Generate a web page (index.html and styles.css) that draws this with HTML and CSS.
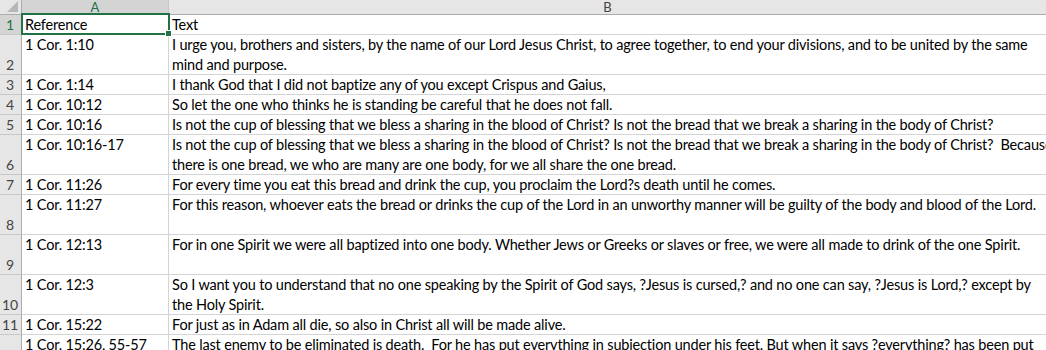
FILE: index.html
```html
<!DOCTYPE html>
<html>
<head>
<meta charset="utf-8">
<link rel="stylesheet" href="styles.css">
</head>
<body>
<div class="sheet">
  <div class="hdr corner"><span class="tri"></span></div>
  <div class="hdr col sel">A</div>
  <div class="hdr col colb">B</div>

  <div class="rh sel-rh">1</div>
  <div class="c a a1">Reference<span class="selbox"><span class="handle"></span></span></div>
  <div class="c b">Text</div>

  <div class="rh h2">2</div>
  <div class="c a h2">1 Cor. 1:10</div>
  <div class="c b h2">I urge you, brothers and sisters, by the name of our Lord Jesus Christ, to agree together, to end your divisions, and to be united by the same<br>mind and purpose.</div>

  <div class="rh">3</div>
  <div class="c a">1 Cor. 1:14</div>
  <div class="c b">I thank God that I did not baptize any of you except Crispus and Gaius,</div>

  <div class="rh">4</div>
  <div class="c a">1 Cor. 10:12</div>
  <div class="c b">So let the one who thinks he is standing be careful that he does not fall.</div>

  <div class="rh">5</div>
  <div class="c a">1 Cor. 10:16</div>
  <div class="c b">Is not the cup of blessing that we bless a sharing in the blood of Christ? Is not the bread that we break a sharing in the body of Christ?</div>

  <div class="rh h2">6</div>
  <div class="c a h2">1 Cor. 10:16-17</div>
  <div class="c b h2">Is not the cup of blessing that we bless a sharing in the blood of Christ? Is not the bread that we break a sharing in the body of Christ?&nbsp; Because<br>there is one bread, we who are many are one body, for we all share the one bread.</div>

  <div class="rh">7</div>
  <div class="c a">1 Cor. 11:26</div>
  <div class="c b">For every time you eat this bread and drink the cup, you proclaim the Lord?s death until he comes.</div>

  <div class="rh h2">8</div>
  <div class="c a h2">1 Cor. 11:27</div>
  <div class="c b h2">For this reason, whoever eats the bread or drinks the cup of the Lord in an unworthy manner will be guilty of the body and blood of the Lord.</div>

  <div class="rh h2">9</div>
  <div class="c a h2">1 Cor. 12:13</div>
  <div class="c b h2">For in one Spirit we were all baptized into one body. Whether Jews or Greeks or slaves or free, we were all made to drink of the one Spirit.</div>

  <div class="rh h2">10</div>
  <div class="c a h2">1 Cor. 12:3</div>
  <div class="c b h2">So I want you to understand that no one speaking by the Spirit of God says, ?Jesus is cursed,? and no one can say, ?Jesus is Lord,? except by<br>the Holy Spirit.</div>

  <div class="rh">11</div>
  <div class="c a">1 Cor. 15:22</div>
  <div class="c b">For just as in Adam all die, so also in Christ all will be made alive.</div>

  <div class="rh h2">12</div>
  <div class="c a h2">1 Cor. 15:26, 55-57</div>
  <div class="c b h2">The last enemy to be eliminated is death.&nbsp; For he has put everything in subjection under his feet. But when it says ?everything? has been put<br>under him, it is clear that this does not include the one who put everything in subjection to him.</div>
</div>
</body>
</html>
```

FILE: styles.css
```css
html, body {
  margin: 0;
  padding: 0;
  background: #ffffff;
  overflow: hidden;
}
body {
  width: 1046px;
  height: 350px;
  font-family: "Lato", "Liberation Sans", sans-serif;
  font-size: 14.5px;
  letter-spacing: -0.17px;
  color: #000;
}
.sheet {
  display: grid;
  grid-template-columns: 22px 147px 877px;
  grid-auto-rows: 20px;
  grid-template-rows: 15px;
}
.hdr {
  background: #e6e6e6;
  border-bottom: 1px solid #ababab;
  border-right: 1px solid #c8c8c8;
  box-sizing: border-box;
  height: 15px;
  font-size: 13px;
  letter-spacing: 0;
  line-height: 14px;
  color: #444;
  text-align: center;
}
.corner {
  position: relative;
  border-right: 1px solid #ababab;
}
.tri {
  position: absolute;
  right: 3px;
  bottom: 2px;
  width: 0;
  height: 0;
  border-left: 11px solid transparent;
  border-bottom: 11px solid #b7b7b7;
}
.col.sel {
  background: #d4d4d4;
  color: #217346;
  border-bottom: 1px solid #217346;
}
.colb { border-right: none; }
.rh {
  background: #e6e6e6;
  border-right: 1px solid #ababab;
  border-bottom: 1px solid #c8c8c8;
  box-sizing: border-box;
  height: 20px;
  font-size: 14px;
  letter-spacing: 0;
  line-height: 19px;
  color: #444;
  display: flex;
  align-items: flex-end;
  justify-content: center;
  padding-right: 1px;
}
.sel-rh {
  background: #d4d4d4;
  color: #217346;
}
.rh.h2, .c.h2 { height: 40px; grid-row: span 2; }
.c {
  box-sizing: border-box;
  height: 20px;
  border-bottom: 1px solid #d4d4d4;
  line-height: 20px;
  padding-left: 3px;
  white-space: nowrap;
}
.c.a { border-right: 1px solid #d4d4d4; overflow: hidden; }
.a1 { position: relative; }
.c.a.a1 { overflow: visible; }
.selbox {
  position: absolute;
  left: -1px;
  top: -2px;
  right: -2px;
  bottom: -1px;
  border: 2px solid #217346;
  pointer-events: none;
}
.handle {
  position: absolute;
  right: -4px;
  bottom: -4px;
  width: 5px;
  height: 5px;
  background: #217346;
  border: 1px solid #fff;
}
```
